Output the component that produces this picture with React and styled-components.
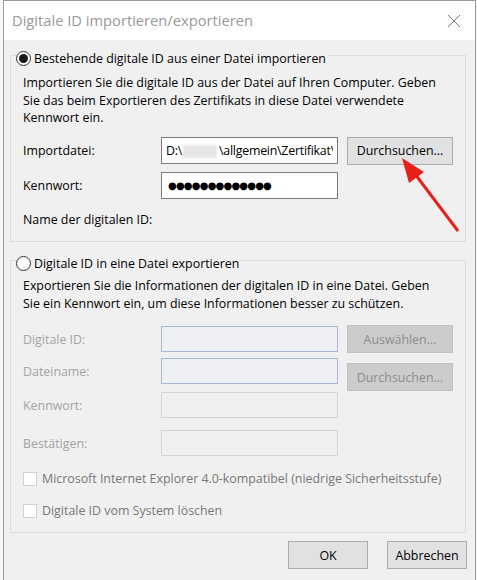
import React from 'react'
import styled, { createGlobalStyle } from 'styled-components'

const GlobalStyle = createGlobalStyle`
  html, body {
    margin: 0;
    padding: 0;
    background: #f4f4f4;
  }
  body {
    font-family: 'Open Sans', 'Noto Sans', sans-serif;
    font-size: 12.4px;
    color: #000;
  }
`

const Desktop = styled.div`
  position: relative;
  width: 477px;
  height: 580px;
  display: flex;
  overflow: hidden;
`
const Behind = styled.div`
  width: 3px;
  background: #f7f7f7;
  flex-shrink: 0;
`
const Window = styled.div`
  width: 473px;
  height: 600px;
  border: 1px solid #9a9a9a;
  border-bottom: 0;
  box-sizing: border-box;
  display: flex;
  flex-direction: column;
  background: #f0f0f0;
`
const TitleBar = styled.div`
  height: 39px;
  background: #fff;
  display: flex;
  align-items: center;
  justify-content: space-between;
  padding: 0 14px 0 8px;
  flex-shrink: 0;
`
const Title = styled.div`
  font-size: 14.7px;
  color: #999;
  margin-top: -1px;
`
const Body = styled.div`
  padding: 3px 0 0 6px;
  display: flex;
  flex-direction: column;
`
const GroupBox = styled.fieldset`
  width: 456px;
  box-sizing: border-box;
  margin: ${({ $top }) => $top}px 0 0 0;
  padding: 0 0 ${({ $bottom }) => $bottom}px 12px;
  border: 1px solid #dcdcdc;
  min-width: 0;
`
const Legend = styled.legend`
  display: flex;
  align-items: center;
  gap: 3px;
  padding: 6px 2px 0 0;
  margin-left: -7px;
  height: 18px;
  box-sizing: content-box;
`
const Radio = styled.span`
  width: 15px;
  height: 15px;
  box-sizing: border-box;
  border-radius: 50%;
  border: 1px solid #333;
  background: #fff;
  display: flex;
  align-items: center;
  justify-content: center;
  &::after {
    content: '';
    width: 9px;
    height: 9px;
    border-radius: 50%;
    background: ${({ $checked }) => ($checked ? '#1a1a1a' : 'transparent')};
  }
`
const Text = styled.div`
  line-height: 17.5px;
  margin-top: ${({ $top }) => $top || 0}px;
  color: ${({ $disabled }) => ($disabled ? '#a3a3a3' : '#000')};
  white-space: nowrap;
`
const Row = styled.div`
  display: flex;
  align-items: ${({ $align }) => $align || 'center'};
  height: ${({ $height }) => $height || 27}px;
  margin-top: ${({ $top }) => $top}px;
`
const Label = styled.div`
  width: 138px;
  flex-shrink: 0;
  margin-top: ${({ $shift }) => $shift || 0}px;
  color: ${({ $disabled }) => ($disabled ? '#a3a3a3' : '#000')};
`
const Field = styled.div`
  width: 177px;
  height: ${({ $h }) => $h || 27}px;
  box-sizing: border-box;
  flex-shrink: 0;
  display: flex;
  align-items: center;
  padding: 0 4px;
  overflow: hidden;
  white-space: nowrap;
  background: ${({ $variant }) =>
    $variant === 'active' ? '#fff' : $variant === 'blue' ? '#eef0f4' : '#f0f0f0'};
  border: 1px solid
    ${({ $variant }) =>
      $variant === 'active' ? '#7a7a7a' : $variant === 'blue' ? '#a8b7d1' : '#d4d4d4'};
`
const PathText = styled.span`
  display: block;
  width: 168px;
  overflow: hidden;
  white-space: nowrap;
  letter-spacing: -0.25px;
`
const Blur = styled.span`
  display: inline-block;
  vertical-align: middle;
  width: 34px;
  height: 13px;
  background: #e6e6e6;
  filter: blur(1px);
  margin: 0 2px 0 1px;
`
const Dots = styled.span`
  font-family: 'DejaVu Sans', sans-serif;
  font-size: 10px;
  letter-spacing: -0.8px;
  margin-left: 2px;
`
const Button = styled.div`
  width: ${({ $w }) => $w || 106}px;
  height: 28px;
  box-sizing: border-box;
  margin-left: ${({ $left }) => $left || 0}px;
  margin-top: ${({ $shift }) => $shift || 0}px;
  display: flex;
  align-items: center;
  justify-content: center;
  flex-shrink: 0;
  background: ${({ $disabled }) => ($disabled ? '#cccccc' : '#e1e1e1')};
  border: 1px solid ${({ $disabled }) => ($disabled ? '#c2c2c2' : '#adadad')};
  color: ${({ $disabled }) => ($disabled ? '#8c8c8c' : '#000')};
`
const CheckRow = styled.div`
  display: flex;
  align-items: center;
  gap: 5px;
  margin-top: ${({ $top }) => $top}px;
  color: #777;
`
const Check = styled.span`
  width: 14px;
  height: 14px;
  box-sizing: border-box;
  border: 1px solid #d0d0d0;
  background: #fff;
`
const Footer = styled.div`
  display: flex;
  gap: 19px;
  padding-left: 278px;
  margin-top: 8px;
`
const FooterButton = styled(Button)`
  width: 80px;
  height: 28px;
`
const Overlay = styled.svg`
  position: absolute;
  left: 0;
  top: 0;
  pointer-events: none;
`

const CloseIcon = () => (
  <svg width="14" height="14" viewBox="0 0 14 14">
    <path d="M1 1 L13 13 M13 1 L1 13" stroke="#7a7a7a" strokeWidth="1" />
  </svg>
)

const App = () => (
  <Desktop>
    <GlobalStyle />
    <Behind />
    <Window>
      <TitleBar>
        <Title>Digitale ID importieren/exportieren</Title>
        <CloseIcon />
      </TitleBar>
      <Body>
        <GroupBox $top={0} $bottom={13}>
          <Legend>
            <Radio $checked />
            Bestehende digitale ID aus einer Datei importieren
          </Legend>
          <Text $top={7}>
            Importieren Sie die digitale ID aus der Datei auf Ihren Computer. Geben
            <br />
            Sie das beim Exportieren des Zertifikats in diese Datei verwendete
            <br />
            Kennwort ein.
          </Text>
          <Row $top={10} $height={28}>
            <Label>Importdatei:</Label>
            <Field $variant="active">
              <PathText>
                D:\<Blur />\allgemein\Zertifikat\
              </PathText>
            </Field>
            <Button $left={9}>Durchsuchen...</Button>
          </Row>
          <Row $top={7}>
            <Label>Kennwort:</Label>
            <Field $variant="active">
              <Dots>●●●●●●●●●●●●●</Dots>
            </Field>
          </Row>
          <Text $top={12}>Name der digitalen ID:</Text>
        </GroupBox>

        <GroupBox $top={6} $bottom={13}>
          <Legend>
            <Radio />
            Digitale ID in eine Datei exportieren
          </Legend>
          <Text $top={5}>
            Exportieren Sie die Informationen der digitalen ID in eine Datei. Geben
            <br />
            Sie ein Kennwort ein, um diese Informationen besser zu schützen.
          </Text>
          <Row $top={13} $height={28}>
            <Label $disabled>Digitale ID:</Label>
            <Field $variant="blue" $h={26} />
            <Button $left={9} $disabled>
              Auswählen...
            </Button>
          </Row>
          <Row $top={5} $height={33} $align="flex-start">
            <Label $disabled $shift={5}>
              Dateiname:
            </Label>
            <Field $variant="blue" $h={26} />
            <Button $left={9} $shift={5} $disabled>
              Durchsuchen...
            </Button>
          </Row>
          <Row $top={1} $height={26}>
            <Label $disabled>Kennwort:</Label>
            <Field $h={26} />
          </Row>
          <Row $top={12} $height={26}>
            <Label $disabled>Bestätigen:</Label>
            <Field $h={26} />
          </Row>
          <CheckRow $top={14}>
            <Check />
            Microsoft Internet Explorer 4.0-kompatibel (niedrige Sicherheitsstufe)
          </CheckRow>
          <CheckRow $top={15}>
            <Check />
            Digitale ID vom System löschen
          </CheckRow>
        </GroupBox>

        <Footer>
          <FooterButton>OK</FooterButton>
          <FooterButton>Abbrechen</FooterButton>
        </Footer>
      </Body>
    </Window>
    <Overlay width="477" height="580" viewBox="0 0 477 580">
      <line x1="458" y1="231" x2="412" y2="170" stroke="#e8201c" strokeWidth="3" />
      <polygon points="402,158 424,172 409,183" fill="#e8201c" />
    </Overlay>
  </Desktop>
)

export default App
